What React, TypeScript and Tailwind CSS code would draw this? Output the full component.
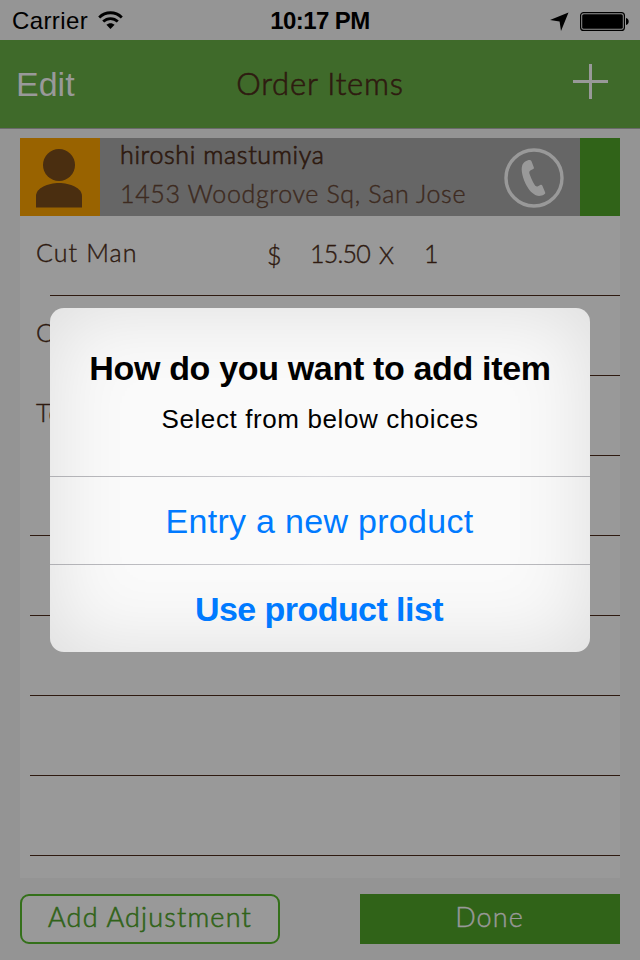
const geo = "font-['Lato',sans-serif] font-light [-webkit-text-stroke:0.4px]";

function WifiIcon() {
  return (
    <svg className="ml-[10px] mb-[1px] h-[19px] w-[25px]" viewBox="0 0 25 19" fill="none" stroke="#000" strokeWidth="2.8">
      <path d="M1.2 6.4C7.6 0.2 17.4 0.2 23.8 6.4" />
      <path d="M5.2 10.6C9.4 6.6 15.6 6.6 19.8 10.6" />
      <path d="M12.5 18L8.4 13.7C10.7 11.6 14.3 11.6 16.6 13.7Z" fill="#000" stroke="none" />
    </svg>
  );
}

function StatusBar() {
  return (
    <div className="grid h-10 grid-cols-3 items-center bg-[#959595] text-[24px] leading-10 text-black">
      <div className="flex items-center pl-[12px]">
        <span className="pt-[1px] tracking-[0.4px]">Carrier</span>
        <WifiIcon />
      </div>
      <div className="pt-[1px] text-center font-bold tracking-[-0.6px] whitespace-nowrap">10:17 PM</div>
      <div className="flex items-center justify-end pr-[10px]">
        <svg className="h-[20px] w-[80px]" viewBox="0 0 80 20">
          <path d="M0 9L18.5 1.5L11 20L9.6 10.4Z" fill="#000" />
          <rect x="30.6" y="1.6" width="43.8" height="17.8" rx="3" fill="none" stroke="#000" strokeWidth="1.2" />
          <rect x="32.2" y="3.2" width="40.6" height="14.6" rx="1.6" fill="#000" />
          <path d="M76 7C79.6 7.8 79.6 13.2 76 14Z" fill="#000" />
        </svg>
      </div>
    </div>
  );
}

function NavBar() {
  return (
    <div className="grid h-[89px] grid-cols-3 items-center border-b border-[#6a6a6a] bg-[#3f6a2a]">
      <div className="pl-[16px] text-[34px] leading-10 text-[#999]">Edit</div>
      <div className={`${geo} pb-[3px] text-center text-[31px] leading-10 tracking-[0.8px] whitespace-nowrap text-[#2e1a10] [-webkit-text-stroke:0.6px]`}>
        Order Items
      </div>
      <div className="flex justify-end pr-[32px] pb-[6px]">
        <svg className="h-[35px] w-[35px]" viewBox="0 0 35 35" stroke="#999" strokeWidth="3">
          <path d="M0 17.5H35M17.5 0V35" />
        </svg>
      </div>
    </div>
  );
}

function CustomerHeader() {
  return (
    <div className="flex h-[78px] bg-[#666]">
      <div className="flex w-[80px] justify-center bg-[#996300]">
        <svg className="h-[78px] w-[80px]" viewBox="0 0 80 78" fill="#4a2e10">
          <circle cx="39" cy="27" r="16" />
          <path d="M16 69.5V58C16 50 28 45 39 45S62 50 62 58V69.5Z" />
        </svg>
      </div>
      <div className="w-[400px] pl-[20px] whitespace-nowrap">
        <div className={`${geo} pt-[1px] text-[25px] leading-[30px] tracking-[0.65px] text-[#2e1a10] [-webkit-text-stroke:0.7px]`}>
          hiroshi mastumiya
        </div>
        <div className={`${geo} mt-[9px] text-[25px] leading-[30px] tracking-[0.65px] text-[#3d2a20]`}>
          1453 Woodgrove Sq, San Jose
        </div>
      </div>
      <div className="flex w-[80px] pt-[10px] pl-[4px]">
        <svg className="h-[60px] w-[60px]" viewBox="0 0 60 60">
          <circle cx="30" cy="30" r="28" fill="none" stroke="#999" strokeWidth="3.4" />
          <path
            d="M26.5 12.2C23.5 11.6 19.5 14 18.2 17.5C16.6 22 18.8 31 22.8 38C26.2 44.2 31.5 48.6 36.5 47.8C38.6 47.5 40.4 46.6 41 45.8C41.5 45.2 41.2 44.6 41 44L38.6 38.2C38.1 36.9 37.3 36.6 36.2 37.1L34 38.2C32.6 38.8 31.4 38.2 30.6 36.8C28.4 33 26.4 28.6 25.4 25.4C25 23.8 25.6 22.8 26.8 22.2L29.2 21C30 20.6 30.1 20 29.8 19.2L27.6 13.4C27.4 12.8 27.1 12.4 26.5 12.2Z"
            fill="#999"
          />
        </svg>
      </div>
      <div className="w-[40px] bg-[#306318]" />
    </div>
  );
}

function ItemRow({ name, price, qty }: { name: string; price?: string; qty?: string }) {
  return (
    <div className={`${geo} flex h-[80px] flex-col text-[25px] leading-[30px] whitespace-nowrap text-[#2e1a10]`}>
      <div className="flex flex-1 pt-[21px] pl-[16px]">
        <span className="w-[231px] tracking-[1.1px]">{name}</span>
        {price && (
          <>
            <span className="w-[43px] pt-[3px]">$</span>
            <span className="w-[69px] pt-[1px] tracking-[-0.8px]">{price}</span>
            <span className="w-[45px] pt-[3px] text-[24px]">X</span>
            <span className="pt-[1px]">{qty}</span>
          </>
        )}
      </div>
      <div className="ml-[30px] h-px bg-[#2e1a10]" />
    </div>
  );
}

function EmptyRow() {
  return <div className="ml-[10px] h-[80px] border-b border-[#2e1a10]" />;
}

function AddItemDialog() {
  return (
    <div className="absolute top-[308px] left-[50px] flex h-[344px] w-[540px] flex-col overflow-hidden rounded-[14px] bg-[#fafafa] text-center whitespace-nowrap shadow-[inset_0_0_80px_rgba(0,0,0,0.12)]">
      <div className="h-[168px] pt-[40px] text-black">
        <div className="text-[34px] leading-[40px] font-bold tracking-[-0.33px]">How do you want to add item</div>
        <div className="mt-[15px] text-[26px] leading-[32px] tracking-[0.6px]">Select from below choices</div>
      </div>
      <div className="h-px bg-gradient-to-r from-[#b0b0b4] via-[#d4d4d9] to-[#b0b0b4]" />
      <div className="h-[87px] pt-[1px] pr-[1px] text-[34px] leading-[87px] tracking-[0.3px] text-[#007aff]">Entry a new product</div>
      <div className="h-px bg-gradient-to-r from-[#b0b0b4] via-[#d4d4d9] to-[#b0b0b4]" />
      <div className="h-[87px] pt-[1px] pr-[2px] text-[34px] leading-[87px] font-bold tracking-[-0.55px] text-[#007aff]">Use product list</div>
    </div>
  );
}

export default function App() {
  return (
    <div className="relative h-[960px] w-[640px] overflow-hidden bg-[#949494] font-['Liberation_Sans',Arial,sans-serif]">
      <StatusBar />
      <NavBar />
      <div className="mx-[20px] mt-[9px] h-[740px] bg-[#999]">
        <CustomerHeader />
        <ItemRow name="Cut Man" price="15.50" qty="1" />
        <ItemRow name="Cut" />
        <ItemRow name="Total" />
        <EmptyRow />
        <EmptyRow />
        <EmptyRow />
        <EmptyRow />
        <EmptyRow />
      </div>
      <div className="mt-[16px] flex justify-between px-[20px]">
        <button className={`${geo} h-[50px] w-[260px] rounded-[9px] border-2 border-[#34701a] bg-[#999] pb-[3px] text-[27px] tracking-[1.2px] whitespace-nowrap text-[#306318] [-webkit-text-stroke:0.6px]`}>
          Add Adjustment
        </button>
        <button className={`${geo} h-[50px] w-[260px] bg-[#306318] pr-[1px] pb-[3px] text-[27px] tracking-[1.1px] text-[#999]`}>
          Done
        </button>
      </div>
      <AddItemDialog />
    </div>
  );
}
